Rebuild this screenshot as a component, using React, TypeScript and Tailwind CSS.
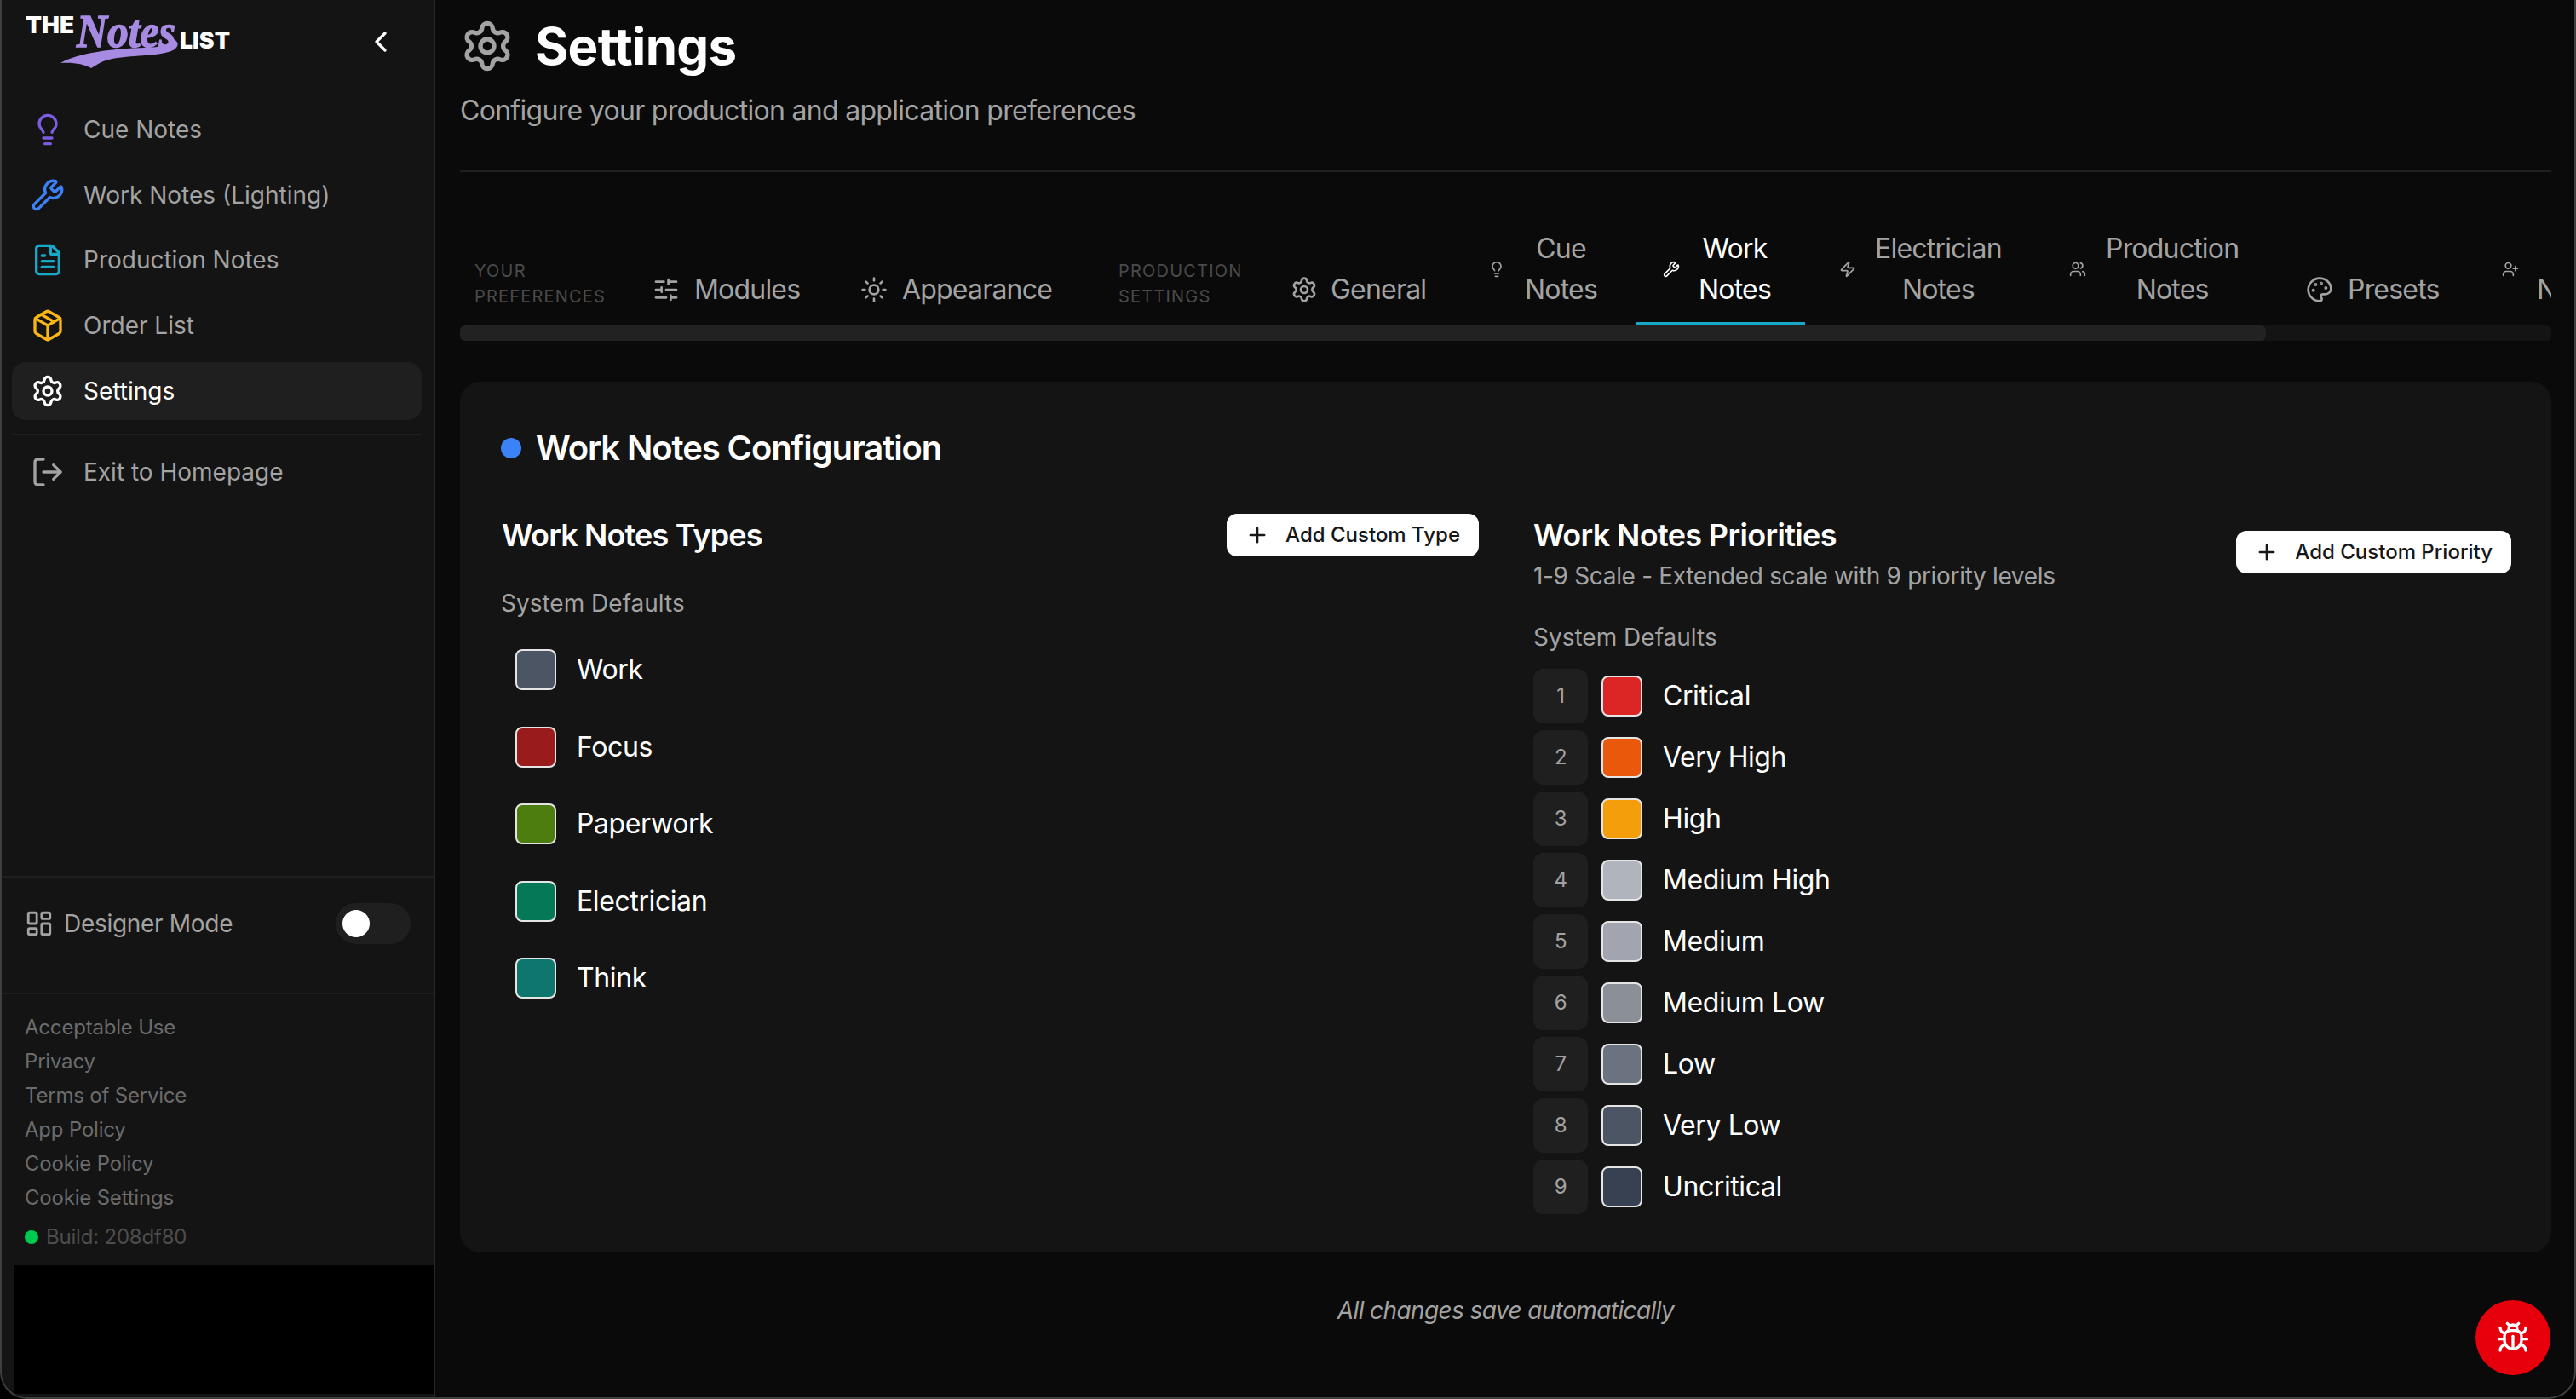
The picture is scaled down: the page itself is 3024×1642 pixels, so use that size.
import {
  Bug,
  ChevronLeft,
  FileText,
  LayoutDashboard,
  Lightbulb,
  LogOut,
  Package,
  Palette,
  Plus,
  Settings,
  SlidersHorizontal,
  Sun,
  UserPlus,
  Users,
  Wrench,
  Zap,
} from 'lucide-react';

const navItems = [
  { label: 'Cue Notes', icon: Lightbulb, color: 'text-[#7c5ce0]' },
  { label: 'Work Notes (Lighting)', icon: Wrench, color: 'text-[#3b82f6]' },
  { label: 'Production Notes', icon: FileText, color: 'text-[#17a8c7]' },
  { label: 'Order List', icon: Package, color: 'text-[#fbb614]' },
];

const footerLinks = ['Acceptable Use', 'Privacy', 'Terms of Service', 'App Policy', 'Cookie Policy', 'Cookie Settings'];

const workTypes = [
  { label: 'Work', color: 'bg-[#4b5563]' },
  { label: 'Focus', color: 'bg-[#991b1b]' },
  { label: 'Paperwork', color: 'bg-[#4d7c0f]' },
  { label: 'Electrician', color: 'bg-[#047857]' },
  { label: 'Think', color: 'bg-[#0f766e]' },
];

const priorities = [
  { label: 'Critical', color: 'bg-[#dc2626]' },
  { label: 'Very High', color: 'bg-[#ea580c]' },
  { label: 'High', color: 'bg-[#f59e0b]' },
  { label: 'Medium High', color: 'bg-[#b0b5bd]' },
  { label: 'Medium', color: 'bg-[#a2a5b0]' },
  { label: 'Medium Low', color: 'bg-[#8b8f98]' },
  { label: 'Low', color: 'bg-[#6b7280]' },
  { label: 'Very Low', color: 'bg-[#4b5563]' },
  { label: 'Uncritical', color: 'bg-[#374151]' },
];

function Logo() {
  return (
    <svg width="290" height="90" viewBox="0 0 290 90" className="block">
      <text x="28" y="39" fontFamily="Inter, sans-serif" fontWeight="900" fontSize="27" fill="#ffffff" textLength="57" lengthAdjust="spacingAndGlyphs">
        THE
      </text>
      <text x="209" y="57" fontFamily="Inter, sans-serif" fontWeight="900" fontSize="27" fill="#ffffff" textLength="59" lengthAdjust="spacingAndGlyphs">
        LIST
      </text>
      <text
        x="88"
        y="55"
        fontFamily="'Liberation Serif', serif"
        fontWeight="700"
        fontStyle="italic"
        fontSize="54"
        fill="#a78be2"
        stroke="#a78be2"
        strokeWidth="1.400"
        textLength="116"
        lengthAdjust="spacingAndGlyphs"
      >
        Notes
      </text>
      <path d="M69 74 C90 62 130 57 168 56 C186 55 200 54 202 46 C209 50 208 56 199 60 C182 66 150 65 130 69 C118 71 112 76 105 80 C96 75 84 73 69 74 Z" fill="#a78be2" />
    </svg>
  );
}

function Sidebar() {
  return (
    <aside className="flex h-full w-[509px] shrink-0 flex-col border-r-2 border-[#262626] bg-[#141414]">
      <div className="flex h-[118px] shrink-0 items-start justify-between">
        <Logo />
        <ChevronLeft className="mt-[29px] mr-[42px] text-white" size={40} strokeWidth={2} />
      </div>
      <nav className="flex flex-col gap-[8.700px] pr-[14px] pl-[12px]">
        {navItems.map((item) => (
          <div key={item.label} className="flex h-[68px] items-center gap-[22px] px-[22px] text-[28px] text-[#a3a3a3]">
            <item.icon className={item.color} size={40} />
            <span>{item.label}</span>
          </div>
        ))}
        <div className="flex h-[68px] items-center gap-[22px] rounded-2xl bg-[#1f1f1f] px-[22px] text-[28px] text-white">
          <Settings size={40} />
          <span>Settings</span>
        </div>
        <div className="mt-[8px] border-t-2 border-[#1f1f1f]" />
        <div className="flex h-[68px] items-center gap-[22px] px-[22px] text-[28px] text-[#a3a3a3]">
          <LogOut size={40} />
          <span>Exit to Homepage</span>
        </div>
      </nav>
      <div className="flex-1" />
      <div className="flex h-[139px] shrink-0 items-start justify-between border-y-2 border-[#1f1f1f] pt-[30px] pr-[27px] pl-[27px]">
        <div className="flex h-[48px] items-center gap-[12px] text-[28px] tracking-[-0.3px] text-[#a3a3a3]">
          <LayoutDashboard size={34} />
          <span>Designer Mode</span>
        </div>
        <div className="flex h-[48px] w-[88px] items-center rounded-full bg-[#1f1f1f] pl-2">
          <div className="h-8 w-8 rounded-full bg-white" />
        </div>
      </div>
      <div className="flex h-[318px] shrink-0 flex-col pt-[19px] pl-[27px] tracking-[-0.2px]">
        {footerLinks.map((link) => (
          <div key={link} className="h-10 text-[24px] leading-10 text-[#6b6b6b]">
            {link}
          </div>
        ))}
        <div className="mt-[6px] flex h-10 items-center gap-[9px] text-[24px] text-[#4d4d4d]">
          <span className="h-4 w-4 rounded-full bg-[#00c950]" />
          Build: 208df80
        </div>
      </div>
      <div className="ml-[15px] h-[151px] shrink-0 bg-black" />
      <div className="h-[4px] shrink-0" />
    </aside>
  );
}

function GroupLabel({ lines, className }: { lines: string[]; className: string }) {
  return (
    <div className={`shrink-0 self-end pb-[19px] text-[20px] leading-[30px] tracking-[1.2px] text-[#4a4a4a] ${className}`}>
      {lines.map((line) => (
        <div key={line}>{line}</div>
      ))}
    </div>
  );
}

function Tab({
  icon: Icon,
  lines,
  iconSize,
  className,
  active,
}: {
  icon: typeof Sun;
  lines: string[];
  iconSize: number;
  className: string;
  active?: boolean;
}) {
  return (
    <div
      className={`flex shrink-0 items-center border-b-4 pt-4 pb-[14px] text-center text-[32px] leading-[48px] tracking-[-0.8px] ${
        active ? 'border-[#17a8c7] text-white' : 'border-transparent text-[#a3a3a3]'
      } ${className}`}
    >
      <Icon size={iconSize} className="shrink-0" />
      <div>
        {lines.map((line) => (
          <div key={line}>{line}</div>
        ))}
      </div>
    </div>
  );
}

function Tabs() {
  return (
    <div>
      <div className="flex items-end overflow-hidden pl-[17px]">
        <GroupLabel lines={['YOUR', 'PREFERENCES']} className="w-[152px]" />
        <Tab icon={SlidersHorizontal} lines={['Modules']} iconSize={32} className="ml-[27px] w-[234px] gap-[17px] pl-[30px]" />
        <Tab icon={Sun} lines={['Appearance']} iconSize={32} className="ml-[9px] w-[286px] gap-[17px] pl-[31px]" />
        <GroupLabel lines={['PRODUCTION', 'SETTINGS']} className="ml-[48px] w-[144px]" />
        <Tab icon={Settings} lines={['General']} iconSize={32} className="ml-[27px] w-[223px] gap-[15px] pl-[31px]" />
        <Tab icon={Lightbulb} lines={['Cue', 'Notes']} iconSize={20} className="ml-[11px] w-[190px] gap-[23px] pl-[29px]" />
        <Tab icon={Wrench} lines={['Work', 'Notes']} iconSize={20} active className="ml-[13px] w-[198px] gap-[22px] pl-[31px]" />
        <Tab icon={Zap} lines={['Electrician', 'Notes']} iconSize={20} className="ml-[8px] w-[262px] gap-[22px] pl-[32px]" />
        <Tab icon={Users} lines={['Production', 'Notes']} iconSize={20} className="ml-[8px] w-[267px] gap-[23px] pl-[32px]" />
        <Tab icon={Palette} lines={['Presets']} iconSize={32} className="ml-[11px] w-[225px] gap-[17px] pl-[32px]" />
        <Tab icon={UserPlus} lines={['\u00a0', 'Notes']} iconSize={20} className="ml-[6px] gap-[21px] pl-[31px]" />
      </div>
      <div className="h-[18px] rounded-md bg-[#141414]">
        <div className="h-full w-[2120px] rounded-md bg-[#222222]" />
      </div>
    </div>
  );
}

function Swatch({ color }: { color: string }) {
  return <div className={`h-12 w-12 shrink-0 rounded-lg border-2 border-[#e5e5e5] ${color}`} />;
}

function AddButton({ label }: { label: string }) {
  return (
    <button className="flex h-[50px] shrink-0 items-center gap-[19px] rounded-xl bg-white px-[22px] text-[24px] font-medium text-[#171717]">
      <Plus size={28} strokeWidth={2.2} />
      {label}
    </button>
  );
}

function ConfigCard() {
  return (
    <section className="mt-12 rounded-3xl bg-[#141414] pt-[50px] pr-[47px] pb-[45px] pl-12">
      <h2 className="flex h-14 items-center gap-[17px] text-[40px] font-semibold tracking-[-1.1px] text-white">
        <span className="h-6 w-6 rounded-full bg-[#3b82f6]" />
        Work Notes Configuration
      </h2>
      <div className="mt-[46px] grid grid-cols-2 gap-16">
        <div>
          <div className="flex items-center justify-between">
            <h3 className="pl-[1px] text-[36px] leading-14 font-semibold tracking-[-0.85px] text-white">Work Notes Types</h3>
            <AddButton label="Add Custom Type" />
          </div>
          <div className="mt-8 text-[28px] leading-10 text-[#a3a3a3]">System Defaults</div>
          <div className="mt-[17px] flex flex-col gap-[8.500px]">
            {workTypes.map((type) => (
              <div key={type.label} className="flex h-[82px] items-center gap-6 pl-[17px] text-[32px] tracking-[-0.4px] text-white">
                <Swatch color={type.color} />
                {type.label}
              </div>
            ))}
          </div>
        </div>
        <div>
          <div className="flex items-center justify-between">
            <div>
              <h3 className="text-[36px] leading-14 font-semibold tracking-[-0.65px] text-white">Work Notes Priorities</h3>
              <p className="text-[28px] leading-10 tracking-[-0.33px] text-[#a3a3a3]">1-9 Scale - Extended scale with 9 priority levels</p>
            </div>
            <AddButton label="Add Custom Priority" />
          </div>
          <div className="mt-8 text-[28px] leading-10 text-[#a3a3a3]">System Defaults</div>
          <div className="mt-[17px] flex flex-col gap-2">
            {priorities.map((priority, index) => (
              <div key={priority.label} className="flex h-16 items-center text-[32px] tracking-[-0.4px] text-white">
                <div className="flex h-16 w-16 shrink-0 items-center justify-center rounded-xl bg-[#1f1f1f] text-[24px] text-[#a3a3a3]">
                  {index + 1}
                </div>
                <div className="mr-[24px] ml-4">
                  <Swatch color={priority.color} />
                </div>
                {priority.label}
              </div>
            ))}
          </div>
        </div>
      </div>
    </section>
  );
}

export default function App() {
  return (
    <div className="h-[1642px] w-[3024px] overflow-hidden bg-black [font-family:Inter,sans-serif]">
      <div className="relative flex h-full overflow-hidden rounded-b-[32px] border-x-2 border-b-2 border-[#3f3f3f] bg-[#0a0a0a]">
        <Sidebar />
        <main className="min-w-0 flex-1 pt-[18px] pr-[27px] pl-[29px]">
          <div className="flex h-[72px] items-center gap-6">
            <Settings size={64} strokeWidth={2} className="shrink-0 text-[#a3a3a3]" />
            <h1 className="text-[60px] font-bold tracking-[-0.7px] text-white">Settings</h1>
          </div>
          <p className="mt-4 text-[32px] leading-12 tracking-[-0.7px] text-[#a3a3a3]">Configure your production and application preferences</p>
          <div className="mt-[46px] mb-[50px] border-t-2 border-[#1f1f1f]" />
          <Tabs />
          <ConfigCard />
          <p className="mt-12 text-center text-[28px] leading-10 tracking-[-0.6px] text-[#a3a3a3] italic">All changes save automatically</p>
        </main>
        <button className="absolute right-[28px] bottom-[26px] flex h-[88px] w-[88px] items-center justify-center rounded-full bg-[#e7000b] text-white">
          <Bug size={40} />
        </button>
      </div>
    </div>
  );
}
